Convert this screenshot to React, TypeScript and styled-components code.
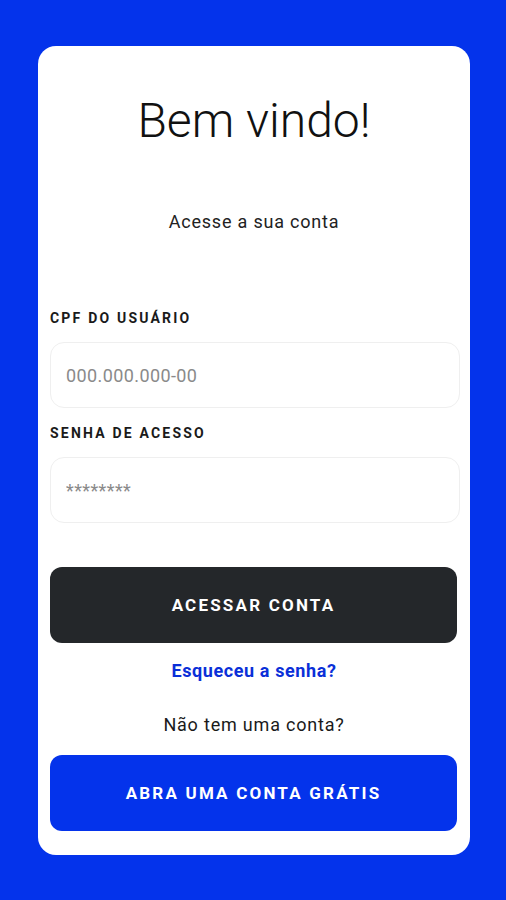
import * as React from 'react';
import styled, { createGlobalStyle } from 'styled-components'

const GlobalStyle = createGlobalStyle`
  html, body {
    margin: 0;
    padding: 0;
    background-color: #0433eb;
    font-family: Roboto, "Noto Sans", sans-serif;
  }
`

const Page = styled.div`
  min-height: 900px;
  box-sizing: border-box;
  padding: 46px 36px 45px 38px;
  display: flex;
  flex-direction: column;
`

const Card = styled.div`
  background-color: #ffffff;
  border-radius: 18px;
  height: 809px;
  box-sizing: border-box;
  padding: 47px 12px 0 12px;
  display: flex;
  flex-direction: column;
`

const Title = styled.h1`
  margin: 0;
  font-size: 48px;
  line-height: 56px;
  font-weight: 300;
  color: #111111;
  text-align: center;
`

const Subtitle = styled.p`
  margin: 61px 0 0 0;
  font-size: 18px;
  line-height: 24px;
  letter-spacing: 0.8px;
  color: #222222;
  text-align: center;
`

const Label = styled.label<{ $top: number }>`
  display: block;
  margin-top: ${p => p.$top}px;
  font-size: 14px;
  line-height: 18px;
  font-weight: 700;
  letter-spacing: 2.2px;
  color: #1a1a1a;
`

const StyledInput = styled.input`
  margin-top: 15px;
  width: 410px;
  height: 66px;
  box-sizing: border-box;
  border: 1px solid #efefef;
  border-radius: 14px;
  padding: 0 15px;
  font-family: Roboto, sans-serif;
  font-size: 18px;
  letter-spacing: 0.4px;
  color: #333;
  outline: none;
  background-color: #ffffff;

  &::placeholder {
    color: #8a8a8a;
  }
`

const Button = styled.button<{ $variant: 'dark' | 'blue'; $top: number }>`
  margin-top: ${p => p.$top}px;
  width: 407px;
  height: 76px;
  border: none;
  border-radius: 12px;
  background-color: ${p => (p.$variant === 'dark' ? '#24272a' : '#0433eb')};
  color: #ffffff;
  font-family: Roboto, sans-serif;
  font-size: 17px;
  font-weight: 700;
  letter-spacing: 2.2px;
  cursor: pointer;
`

const Link = styled.a`
  margin-top: 16px;
  display: block;
  text-align: center;
  font-size: 18px;
  line-height: 24px;
  font-weight: 700;
  letter-spacing: 0.6px;
  color: #0a2fd8;
  text-decoration: none;
`

const Text = styled.p`
  margin: 30px 0 0 0;
  font-size: 18px;
  line-height: 24px;
  letter-spacing: 0.8px;
  color: #1a1a1a;
  text-align: center;
`

export default function App() {
  return (
    <Page>
      <GlobalStyle />
      <Card>
        <Title>Bem vindo!</Title>
        <Subtitle>Acesse a sua conta</Subtitle>
        <Label $top={75}>CPF DO USUÁRIO</Label>
        <StyledInput placeholder="000.000.000-00" />
        <Label $top={16}>SENHA DE ACESSO</Label>
        <StyledInput type="password" placeholder="********" />
        <Button $variant="dark" $top={44}>ACESSAR CONTA</Button>
        <Link href="#">Esqueceu a senha?</Link>
        <Text>Não tem uma conta?</Text>
        <Button $variant="blue" $top={18}>ABRA UMA CONTA GRÁTIS</Button>
      </Card>
    </Page>
  )
}
